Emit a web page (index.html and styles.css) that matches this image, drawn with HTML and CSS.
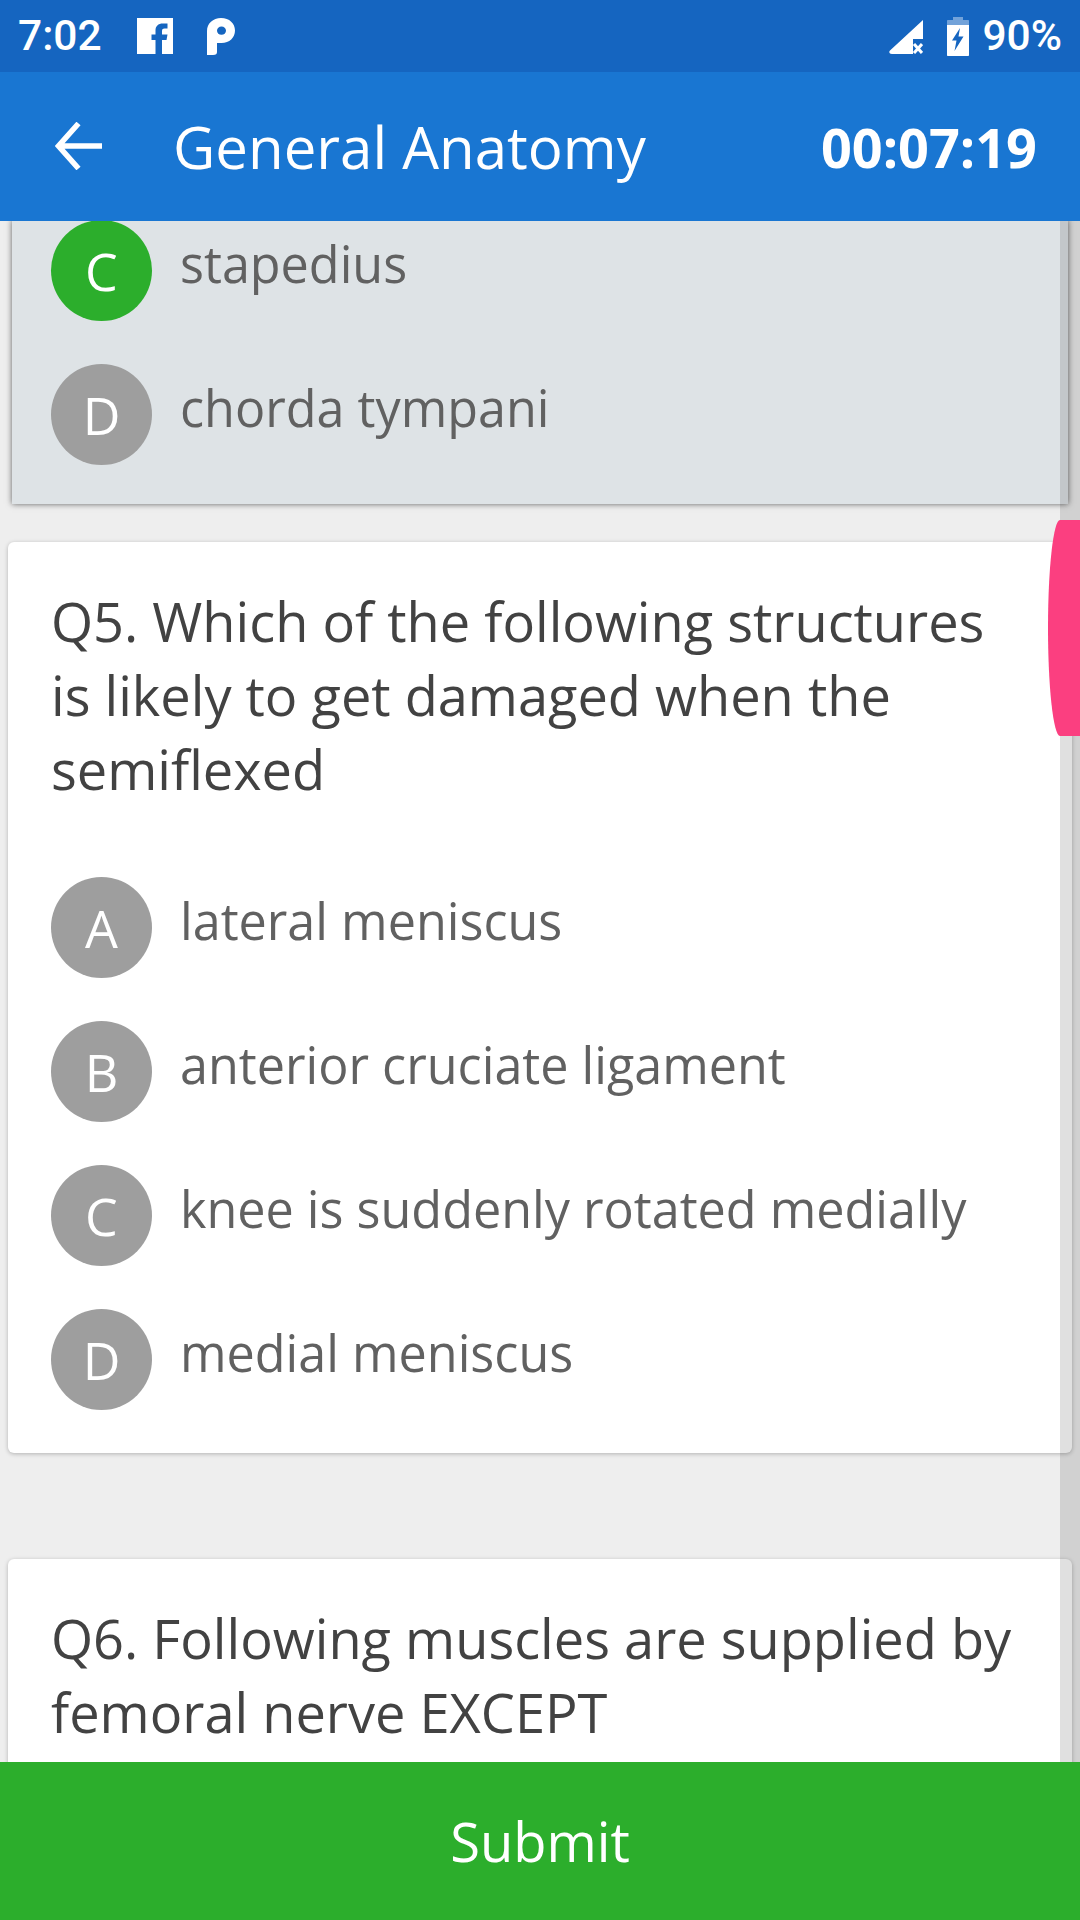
FILE: index.html
```html
<!DOCTYPE html>
<html lang="en">
<head>
<meta charset="utf-8">
<title>General Anatomy</title>
<link rel="stylesheet" href="styles.css">
</head>
<body>
<div class="app">
  <div class="status">
    <div class="status-left">
      <span class="clock">7:02</span>
      <svg class="ic-fb" viewBox="0 0 36 36"><path fill="#fff" d="M0 0H36V36H25V22H29.5L30.5 16.500H25V13C25 11.300 25.800 10.500 27.500 10.500H30.500V5.500H26C21 5.500 18.500 8.200 18.500 12.500V16.500H14.500V22H18.500V36H0Z"/></svg>
      <svg class="ic-p" viewBox="0 0 28 37"><path fill="#fff" fill-rule="evenodd" d="M14 0C22.500 0 28 5.500 28 12.500C28 19.500 22.500 25 14.500 25H10V34C10 36 9 37 6 37H0V13C0 5.500 6 0 14 0ZM14.500 8.500C12 8.500 10 10.300 10 12.700C10 15 12 16.800 14.500 16.800C17 16.800 19 15 19 12.700C19 10.300 17 8.500 14.500 8.500Z"/></svg>
    </div>
    <div class="status-right">
      <svg class="ic-signal" viewBox="0 0 34 34"><path fill="#fff" d="M34 0V19H24V34H3C0.500 34 -0.500 32 1 30.500Z"/><path stroke="#fff" stroke-width="3" fill="none" d="M25 24L33 33M33 24L25 33"/></svg>
      <svg class="ic-batt" viewBox="0 0 22 39"><path fill="#fff" opacity=".4" d="M6 0H16V3H21C21.600 3 22 3.400 22 4V8H0V4C0 3.400 .4 3 1 3H6Z"/><path fill="#fff" fill-rule="evenodd" d="M0 8H22V38C22 38.600 21.600 39 21 39H1C.4 39 0 38.600 0 38ZM13 11L5 23.500H9.500L7.500 34L16.500 19.500H11.500Z"/></svg>
      <span class="pct">90%</span>
    </div>
  </div>
  <header class="appbar">
    <svg class="ic-back" viewBox="0 0 48 48"><path fill="none" stroke="#fff" stroke-width="5.500" d="M47 24H4M23.500 1.500L3.500 24L23.500 46.500"/></svg>
    <h1 class="title">General Anatomy</h1>
    <span class="timer">00:07:19</span>
  </header>
  <main class="scroller">
    <section class="card card-answered">
      <div class="options">
        <div class="option"><span class="bubble bubble-correct">C</span><span class="opt-text">stapedius</span></div>
        <div class="option"><span class="bubble">D</span><span class="opt-text">chorda tympani</span></div>
      </div>
    </section>
    <section class="card card-q5">
      <p class="question">Q5. Which of the following structures is likely to get damaged when the semiflexed</p>
      <div class="options">
        <div class="option"><span class="bubble">A</span><span class="opt-text">lateral meniscus</span></div>
        <div class="option"><span class="bubble">B</span><span class="opt-text">anterior cruciate ligament</span></div>
        <div class="option"><span class="bubble">C</span><span class="opt-text">knee is suddenly rotated medially</span></div>
        <div class="option"><span class="bubble">D</span><span class="opt-text">medial meniscus</span></div>
      </div>
    </section>
    <section class="card card-q6">
      <p class="question">Q6. Following muscles are supplied by femoral nerve EXCEPT</p>
    </section>
    <div class="track"></div>
    <div class="thumb"></div>
  </main>
  <button class="submit">Submit</button>
</div>
</body>
</html>
```
FILE: styles.css
```css
* { box-sizing: border-box; }
html, body { margin: 0; padding: 0; }
body { width: 1080px; height: 1920px; overflow: hidden; font-family: "Open Sans", sans-serif; }
.app { display: flex; flex-direction: column; height: 1920px; background: #eeeeee; }

.status { height: 72px; flex: none; background: #1565c0; color: #fff; display: flex; justify-content: space-between; align-items: center; padding: 0 18px; font-family: Roboto, sans-serif; font-size: 42.500px; font-weight: 500; }
.status-left, .status-right { display: flex; align-items: center; }
.clock { width: 119px; line-height: 72px; }
.ic-fb { width: 36px; height: 36px; margin-right: 34px; }
.ic-p { width: 28px; height: 37px; }
.ic-signal { width: 34px; height: 34px; margin-right: 24px; margin-top: 2px; }
.ic-batt { width: 22px; height: 39px; margin-right: 13px; }
.pct { line-height: 72px; }

.appbar { height: 149px; flex: none; background: #1976d2; color: #fff; display: flex; align-items: center; padding: 0 43px 0 55px; }
.ic-back { width: 48px; height: 48px; flex: none; margin-right: 70px; margin-top: -2px; }
.title { flex: 1; margin: 2px 0 0; font-size: 58.200px; font-weight: 400; line-height: 1; }
.timer { font-size: 54px; font-weight: 700; }

.scroller { flex: 1; min-height: 0; overflow: hidden; position: relative; }
.card { background: #fff; margin: 0 8px; border-radius: 6px; box-shadow: 0 1px 4px rgba(0,0,0,.25); }
.card-answered { margin: 0 12px; background: #dee3e6; border-radius: 0; padding: 0 39px 39px; box-shadow: 0 0 6px rgba(0,0,0,.6); }
.card-answered .options { margin-top: -1px; }
.card-q5 { margin-top: 38px; padding: 42px 43px 43px; }
.card-q6 { margin-top: 106px; padding: 42px 43px; }
.question { margin: 0 0 71px; font-size: 54.150px; line-height: 74px; color: #424242; }
.options { display: flex; flex-direction: column; gap: 43px; }
.option { display: flex; align-items: flex-start; }
.bubble { width: 101px; height: 101px; flex: none; border-radius: 50%; background: #9e9e9e; color: #fff; font-size: 52px; display: flex; align-items: center; justify-content: center; margin-right: 28px; }
.bubble-correct { background: #2cae2c; }
.opt-text { font-size: 50.300px; line-height: 88px; color: #616161; }

.track { position: absolute; top: 0; right: 0; bottom: 0; width: 20px; background: rgba(0,0,0,.12); }
.thumb { position: absolute; top: 299px; right: 0; width: 32px; height: 216px; background: #fb3f80; border-radius: 12px 0 0 12px / 108px 0 0 108px; }

.submit { height: 158px; flex: none; width: 100%; border: 0; background: #2cae2c; color: #fff; font-family: "Open Sans", sans-serif; font-size: 54.300px; }
```
